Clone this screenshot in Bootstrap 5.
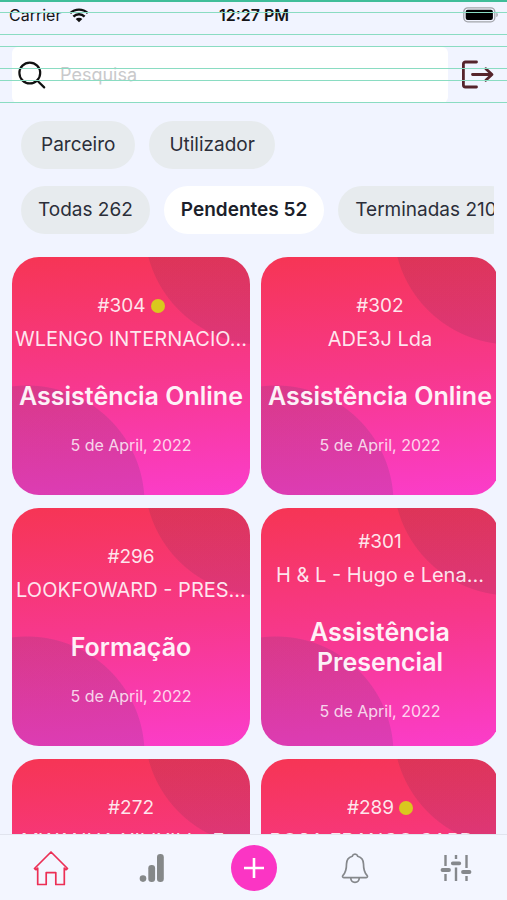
<!DOCTYPE html>
<html lang="pt">
<head>
<meta charset="utf-8">
<meta name="viewport" content="width=device-width, initial-scale=1">
<title>Assistências</title>
<link href="https://cdn.jsdelivr.net/npm/bootstrap@5.3.0/dist/css/bootstrap.min.css" rel="stylesheet">
<style>
  body { background: #f1f4ff; font-family: Inter, "Open Sans", sans-serif; color: #23262f; }
  .guides {
    height: 104px; pointer-events: none; z-index: 5;
    background:
      linear-gradient(#3fbd99, #3fbd99) 0 0 / 100% 2px no-repeat,
      linear-gradient(#8adcc2, #8adcc2) 0 12px / 100% 1px no-repeat,
      linear-gradient(#8adcc2, #8adcc2) 0 34px / 100% 1px no-repeat,
      linear-gradient(#8adcc2, #8adcc2) 0 46px / 100% 1px no-repeat,
      linear-gradient(#8adcc2, #8adcc2) 0 68px / 100% 1px no-repeat,
      linear-gradient(#8adcc2, #8adcc2) 0 80px / 100% 1px no-repeat,
      linear-gradient(#8adcc2, #8adcc2) 0 102px / 100% 1px no-repeat;
  }
  .status-bar { display: grid; grid-template-columns: 1fr auto 1fr; height: 30px; padding: 0 8px 0 9px; font-size: 16px; line-height: 20px; color: #151518; }
  .top-bar { padding: 17px 12px 0; gap: 13px; }
  .search-box { height: 56px; background: #fff; border-radius: 6px; padding: 0 6px; gap: 14px; }
  .search-box input { font-size: 18px; color: #23262f; line-height: 24px; }
  .search-box input::placeholder { color: #c9c9cb; opacity: 1; }
  .chips { padding: 18px 13px 0 21px; }
  .chip-row { gap: 14px; overflow: hidden; }
  .chip-row + .chip-row { margin-top: 17px; }
  .chip { flex: none; height: 48px; border: 0; border-radius: 24px; background: #e7ebee; color: #2b2e39; font-size: 19px; line-height: 24px; padding: 0 20px; white-space: nowrap; }
  .chip-row + .chip-row .chip { padding: 0 17px; }
  .chip.current { background: #fff; color: #1c1f2b; font-weight: 600; }
  .board { margin: 23px 11px 0 12px; min-height: 0; }
  .tiles { display: grid; grid-template-columns: repeat(2, minmax(0, 1fr)); gap: 13px 11px; margin-right: -3px; }
  .tile {
    aspect-ratio: 1; border-radius: 27px; padding-bottom: 4px; color: rgba(255,255,255,.88); text-decoration: none;
    background:
      radial-gradient(circle at 15px 246px, rgba(100,60,120,.2) 117px, transparent 118px),
      radial-gradient(circle at 250px -30px, rgba(100,50,80,.17) 117px, transparent 118px),
      linear-gradient(175deg, #f63554 0%, #f7388c 50%, #fb3dcb 100%);
  }
  .ticket { font-size: 19px; line-height: 28px; gap: 5px; }
  .dot { width: 14px; height: 14px; border-radius: 50%; background: #d9c81e; }
  .client { font-size: 20px; line-height: 30px; margin-top: 4px; white-space: nowrap; }
  .service { font-size: 25px; line-height: 30px; font-weight: 600; margin: 27px 0 22px; color: #fff; opacity: .93; white-space: nowrap; }
  .date { font-size: 16px; line-height: 24px; color: rgba(255,255,255,.8); }
  .tab-bar { height: 66px; border-top: 1px solid #e1e4ee; background: #f3f6ff; }
  .tab-bar a, .tab-bar button { flex: 1 1 0; }
  .add { width: 46px; height: 46px; border-radius: 50%; background: #fb35c4; }
</style>
<script src="https://cdn.jsdelivr.net/npm/bootstrap@5.3.0/dist/js/bootstrap.bundle.min.js"></script>
</head>
<body>
<div class="vh-100 d-flex flex-column overflow-hidden position-relative">
  <div class="guides position-absolute top-0 start-0 w-100"></div>

  <div class="status-bar flex-shrink-0 align-items-center">
    <span class="d-flex align-items-center gap-2">Carrier
      <svg width="20" height="15" viewBox="0 0 20 15" aria-hidden="true"><g fill="none" stroke="#111" stroke-width="2.4"><path d="M1.200 5.200a12.600 12.600 0 0 1 17.600 0"/><path d="M4.400 8.600a8 8 0 0 1 11.200 0"/></g><path fill="#111" d="M10 14.300 6.700 11a4.700 4.700 0 0 1 6.600 0z"/></svg>
    </span>
    <span class="fw-semibold">12:27 PM</span>
    <svg class="ms-auto" width="36" height="16" viewBox="0 0 36 16" aria-hidden="true"><rect x=".8" y=".8" width="31" height="14" rx="4" fill="none" stroke="#a3a5ab" stroke-width="1.3"/><rect x="2.7" y="2.7" width="27.2" height="10.2" rx="2" fill="#000"/><path d="M33.300 5.500c2 .6 2 4 0 4.600z" fill="#a3a5ab"/></svg>
  </div>

  <header class="top-bar flex-shrink-0 d-flex align-items-center">
    <label class="search-box d-flex align-items-center flex-grow-1" for="pesquisa">
      <svg class="flex-shrink-0" width="28" height="28" viewBox="0 0 28 28" fill="none" stroke="#111" stroke-width="2.2" stroke-linecap="round" aria-hidden="true"><circle cx="11.8" cy="12" r="10.400"/><path d="m19.400 19.800 6.800 6.600"/></svg>
      <input id="pesquisa" class="border-0 p-0 flex-grow-1 bg-transparent" type="search" placeholder="Pesquisa" aria-label="Pesquisa">
    </label>
    <button class="btn border-0 p-0 lh-1" type="button" aria-label="Sair">
      <svg width="34" height="30" viewBox="0 0 34 30" fill="none" stroke="#55232b" stroke-width="2.8" stroke-linecap="round" stroke-linejoin="round"><path d="M15.500 2H4.400A2 2 0 0 0 2.400 4v21a2 2 0 0 0 2 2h11.100M11.500 14.500h19M24.800 8.800l6.200 5.700-6.200 5.700"/></svg>
    </button>
  </header>

  <div class="chips flex-shrink-0">
    <div class="chip-row d-flex">
      <button class="chip" type="button">Parceiro</button>
      <button class="chip" type="button">Utilizador</button>
    </div>
    <div class="chip-row d-flex">
      <button class="chip" type="button">Todas 262</button>
      <button class="chip current" type="button" aria-pressed="true">Pendentes 52</button>
      <button class="chip" type="button">Terminadas 210</button>
    </div>
  </div>

  <main class="board flex-grow-1 overflow-hidden">
    <div class="tiles">
      <a href="#" class="tile d-flex flex-column align-items-center justify-content-center text-center overflow-hidden">
        <span class="ticket d-flex align-items-center">#304 <i class="dot"></i></span>
        <span class="client">WLENGO INTERNACIO...</span>
        <strong class="service">Assistência Online</strong>
        <span class="date">5 de April, 2022</span>
      </a>
      <a href="#" class="tile d-flex flex-column align-items-center justify-content-center text-center overflow-hidden">
        <span class="ticket">#302</span>
        <span class="client">ADE3J Lda</span>
        <strong class="service">Assistência Online</strong>
        <span class="date">5 de April, 2022</span>
      </a>
      <a href="#" class="tile d-flex flex-column align-items-center justify-content-center text-center overflow-hidden">
        <span class="ticket">#296</span>
        <span class="client">LOOKFOWARD - PRES...</span>
        <strong class="service">Formação</strong>
        <span class="date">5 de April, 2022</span>
      </a>
      <a href="#" class="tile d-flex flex-column align-items-center justify-content-center text-center overflow-hidden">
        <span class="ticket">#301</span>
        <span class="client">H &amp; L - Hugo e Lena...</span>
        <strong class="service">Assistência<br>Presencial</strong>
        <span class="date">5 de April, 2022</span>
      </a>
      <a href="#" class="tile d-flex flex-column align-items-center justify-content-center text-center overflow-hidden">
        <span class="ticket">#272</span>
        <span class="client">MWANHA XILIXILI - F...</span>
        <strong class="service">Formação</strong>
        <span class="date">5 de April, 2022</span>
      </a>
      <a href="#" class="tile d-flex flex-column align-items-center justify-content-center text-center overflow-hidden">
        <span class="ticket d-flex align-items-center">#289 <i class="dot"></i></span>
        <span class="client">ROSA FRANCO CARD...</span>
        <strong class="service">Formação</strong>
        <span class="date">5 de April, 2022</span>
      </a>
    </div>
  </main>

  <nav class="tab-bar d-flex align-items-center flex-shrink-0" aria-label="Principal">
    <a href="#" class="d-flex justify-content-center" aria-label="Início" aria-current="page">
      <svg width="36" height="36" viewBox="0 0 36 36" fill="none" stroke="#ec2f55" stroke-width="1.7" stroke-linejoin="round"><path d="M1.500 18.500 18 2l16.500 16.500-1.600 1.200-1.600-1.500v16.300h-8.500V22.600h-9.600v11.900H4.700V18.200l-1.600 1.500z"/></svg>
    </a>
    <a href="#" class="d-flex justify-content-center" aria-label="Estatísticas">
      <svg width="26" height="30" viewBox="0 0 26 30" fill="#858889"><circle cx="4" cy="25.600" r="3.300"/><rect x="9.300" y="12" width="6.800" height="17" rx="3.200"/><rect x="18" y="1" width="6.800" height="28" rx="3.200"/></svg>
    </a>
    <button type="button" class="btn border-0 p-0 d-flex justify-content-center" aria-label="Adicionar">
      <span class="add d-flex align-items-center justify-content-center"><svg width="22" height="22" viewBox="0 0 22 22" stroke="#fff" stroke-width="2.6"><path d="M11 1v20M1 11h20"/></svg></span>
    </button>
    <a href="#" class="d-flex justify-content-center" aria-label="Notificações">
      <svg width="28" height="32" viewBox="0 0 28 32" fill="none" stroke="#85888c" stroke-width="1.7" stroke-linecap="round" stroke-linejoin="round"><path d="M14 2.200c-1.600 0-2.400.9-2.700 2C7.400 5.300 5.500 8.400 5.500 12c0 7-1.200 9-3.500 11.300-.9 1-.5 2.300.8 2.300h22.400c1.300 0 1.700-1.300.8-2.300C23.700 21 22.500 19 22.500 12c0-3.600-1.900-6.700-5.800-7.800-.3-1.100-1.100-2-2.700-2zM9.700 26c.2 2.700 1.900 4.300 4.300 4.300s4.100-1.600 4.300-4.300"/></svg>
    </a>
    <a href="#" class="d-flex justify-content-center" aria-label="Definições">
      <svg width="32" height="28" viewBox="0 0 32 28" fill="none" stroke="#85888c"><path stroke-width="2.400" d="M5.500 1v11M5.500 20v7M16 1v4M16 13.500v13.500M26.500 1v13M26.500 22v5"/><path stroke-width="3.800" stroke-linecap="round" d="M2.500 16h6.500M12.800 9.300h6.500M23 18h6.500"/></svg>
    </a>
  </nav>
</div>
</body>
</html>
